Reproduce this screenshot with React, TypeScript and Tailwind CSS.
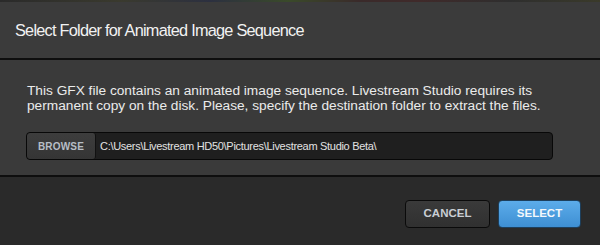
export default function App() {
  return (
    <div className="w-[600px] h-[245px] flex flex-col bg-[#2a2a2a] font-['Liberation_Sans',Arial,sans-serif] overflow-hidden">
      <div className="h-[2px] bg-[linear-gradient(90deg,#2a2a2a_0%,#3a3a2e_20%,#2c3040_35%,#3a4a2a_48%,#3a2a2a_60%,#402a2a_70%,#2e2e2e_85%,#3a3a2a_100%)]" />
      <div className="h-[56px] bg-[#3b3b3b] pl-[15px] flex items-center">
        <span className="text-[16.3px] text-[#f2f2f2] tracking-[-0.75px] whitespace-nowrap">Select Folder for Animated Image Sequence</span>
      </div>
      <div className="h-[2px] bg-[#0e0e0e]" />
      <div className="h-[115px] bg-[#3a3a3a] px-[26px] pt-[23px]">
        <p className="text-[13.7px] leading-[15px] text-[#ebebeb] pl-[1px] whitespace-nowrap">
          This GFX file contains an animated image sequence. Livestream Studio requires its
          <br />
          permanent copy on the disk. Please, specify the destination folder to extract the files.
        </p>
        <div className="mt-[19px] w-[527px] h-[28px] bg-[#1f1f1f] border border-[#080808] rounded-[4px] flex items-stretch overflow-hidden">
          <button className="w-[69px] bg-[linear-gradient(#3d3d3d,#353535)] border-r border-[#111] rounded-[3px] text-[10px] font-bold text-[#b7bec6] tracking-[0.2px]">
            BROWSE
          </button>
          <span className="pl-[4px] flex items-center text-[11px] text-[#e2e2e2] tracking-[-0.3px] whitespace-nowrap">
            C:\Users\Livestream HD50\Pictures\Livestream Studio Beta\
          </span>
        </div>
      </div>
      <div className="h-[2px] bg-[#0e0e0e]" />
      <div className="flex-1 bg-[#2a2a2a] flex justify-end items-start pt-[23px] pr-[19px] gap-[8px]">
        <button className="w-[85px] h-[28px] rounded-[4px] border border-[#0a0a0a] bg-[linear-gradient(#3a3a3a,#303030)] text-[11.5px] font-bold text-[#c9ced4]">
          CANCEL
        </button>
        <button className="w-[83px] h-[28px] rounded-[4px] border border-[#1d3f5c] bg-[linear-gradient(#5cacea,#3e8fd3)] text-[11.5px] font-bold text-[#f4f8fc]">
          SELECT
        </button>
      </div>
    </div>
  );
}
